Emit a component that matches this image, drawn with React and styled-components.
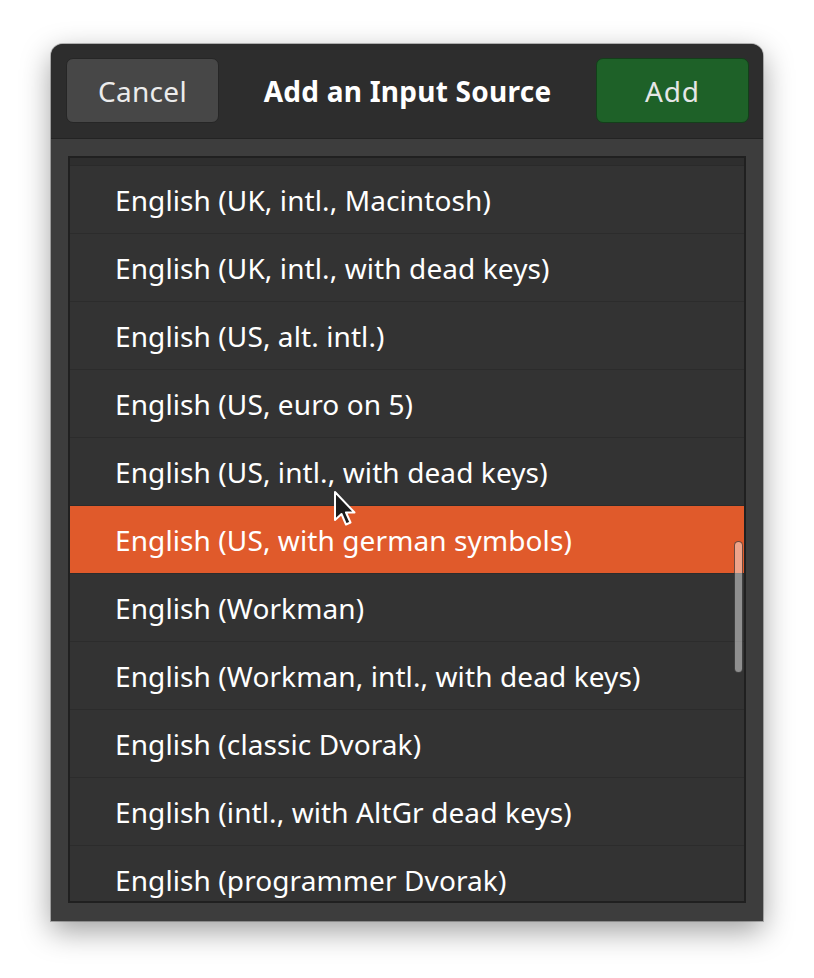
import React from "react";
import styled, { createGlobalStyle } from "styled-components";

const layouts = [
  "English (UK, intl., Macintosh)",
  "English (UK, intl., with dead keys)",
  "English (US, alt. intl.)",
  "English (US, euro on 5)",
  "English (US, intl., with dead keys)",
  "English (US, with german symbols)",
  "English (Workman)",
  "English (Workman, intl., with dead keys)",
  "English (classic Dvorak)",
  "English (intl., with AltGr dead keys)",
  "English (programmer Dvorak)"
];

const selectedLayout = "English (US, with german symbols)";

const App = () => {
  return (
    <React.Fragment>
      <GlobalStyle />
      <Page>
        <Window>
          <HeaderBar>
            <HeaderButton>Cancel</HeaderButton>
            <Title>Add an Input Source</Title>
            <HeaderButton suggested>Add</HeaderButton>
          </HeaderBar>
          <Content>
            <ListFrame>
              {/* bottom of the row scrolled out above */}
              <RowTail />
              {layouts.map(name => (
                <Row key={name} selected={name === selectedLayout}>
                  {name}
                </Row>
              ))}
              <ScrollThumb />
              <Pointer />
            </ListFrame>
          </Content>
        </Window>
      </Page>
    </React.Fragment>
  );
};

const Pointer = () => (
  <PointerWrap>
    <svg width="26" height="38" viewBox="0 0 26 38">
      <path
        d="M2 2 L2 30 L8.5 24 L13 34.5 L17.5 32.5 L13 22.5 L21.5 22.5 Z"
        fill="#1c1c1c"
        stroke="#ffffff"
        strokeWidth="2"
        strokeLinejoin="round"
      />
    </svg>
  </PointerWrap>
);

const GlobalStyle = createGlobalStyle`
  html, body {
    margin: 0;
    padding: 0;
    background: #ffffff;
  }
  body {
    font-family: "Noto Sans", "DejaVu Sans", sans-serif;
  }
`;

const Page = styled.div`
  width: 814px;
  height: 978px;
  padding: 44px 0 0 51px;
  box-sizing: border-box;
`;

const Window = styled.div`
  width: 712px;
  height: 877px;
  display: flex;
  flex-direction: column;
  background: #3d3d3d;
  border-radius: 12px 12px 0 0;
  box-shadow: 0 10px 30px rgba(0, 0, 0, 0.38), 0 0 0 1px rgba(0, 0, 0, 0.25);
  overflow: hidden;
`;

const HeaderBar = styled.div`
  height: 95px;
  box-sizing: border-box;
  flex-shrink: 0;
  display: flex;
  align-items: center;
  justify-content: space-between;
  padding: 0 14px 1px 15px;
  background: #2d2d2d;
  border-bottom: 1px solid #232323;
`;

const HeaderButton = styled.button`
  width: 153px;
  height: 65px;
  box-sizing: border-box;
  border-radius: 7px;
  border: 1px solid ${p => (p.suggested ? "#133f1a" : "#262626")};
  background: ${p => (p.suggested ? "#1e6128" : "#474747")};
  color: ${p => (p.suggested ? "#e6e6e6" : "#ececec")};
  font-family: inherit;
  font-size: 28px;
  letter-spacing: ${p => (p.suggested ? "0.8px" : "0.3px")};
  padding: 0;
`;

const Title = styled.div`
  color: #ffffff;
  font-weight: bold;
  font-size: 28px;
  letter-spacing: 0.25px;
`;

const Content = styled.div`
  flex: 1;
  padding: 17px 17px 18px 17px;
  display: flex;
  min-height: 0;
`;

const ListFrame = styled.div`
  position: relative;
  flex: 1;
  border: 2px solid #202020;
  background: #333333;
  overflow: hidden;
`;

const RowTail = styled.div`
  height: 7px;
  background: #2e2e2e;
  border-bottom: 1px solid #2a2a2a;
`;

const Row = styled.div`
  height: 67px;
  display: flex;
  align-items: center;
  padding-left: 45px;
  border-bottom: 1px solid #2c2c2c;
  background: ${p => (p.selected ? "#e05a2b" : "#333333")};
  color: #ffffff;
  font-size: 28px;
  letter-spacing: 0.1px;
  white-space: nowrap;
`;

const ScrollThumb = styled.div`
  position: absolute;
  right: 1px;
  top: 383px;
  width: 7px;
  height: 130px;
  border-radius: 5px;
  background: rgba(255, 255, 255, 0.45);
  border: 1px solid rgba(0, 0, 0, 0.55);
`;

const PointerWrap = styled.div`
  position: absolute;
  left: 263px;
  top: 332px;
  line-height: 0;
`;

export default App;
